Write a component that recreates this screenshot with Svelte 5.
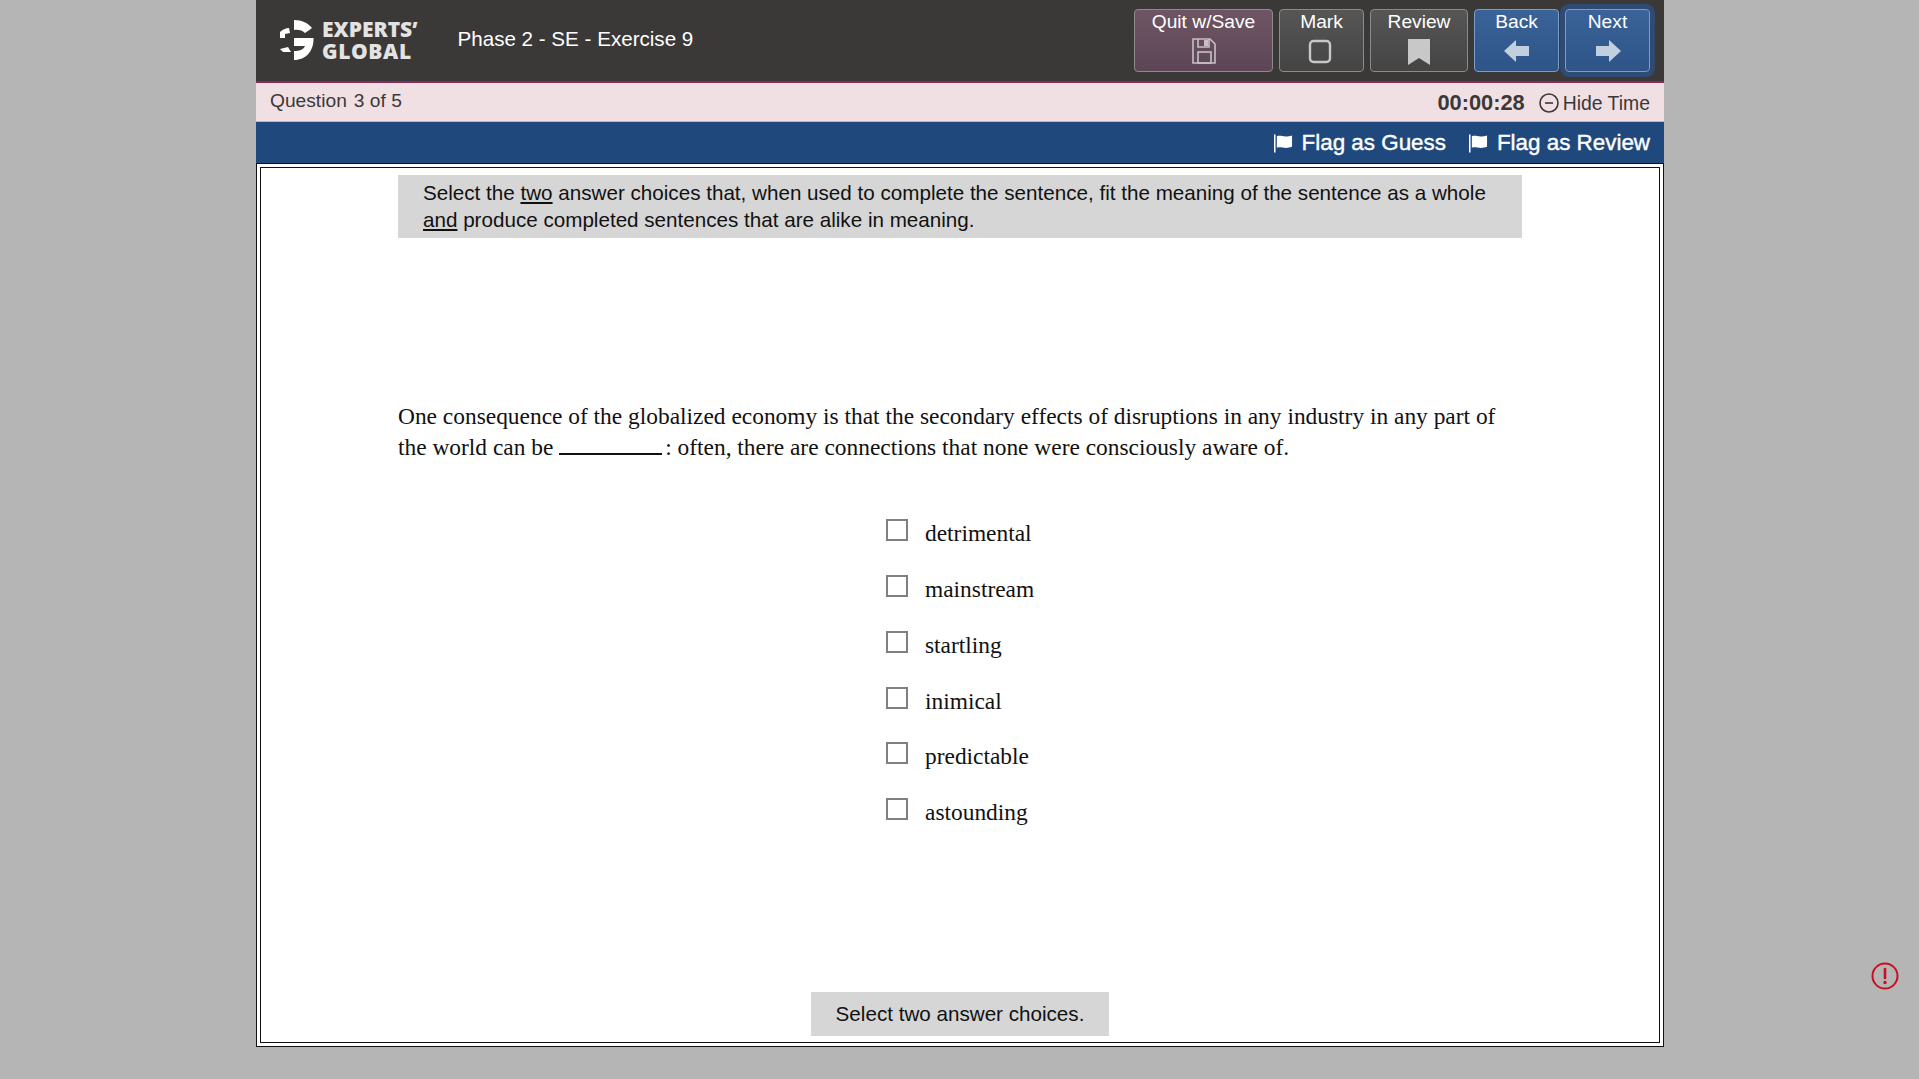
<script>
	const options = ['detrimental', 'mainstream', 'startling', 'inimical', 'predictable', 'astounding'];
</script>

<div class="wrap">
	<header class="top">
		<div class="logo">
			<svg width="34" height="41" viewBox="0 0 34 41" fill="#fff">
				<path d="M14 0 C22 0 28 3 32 8 L25 13 C22 10 18 9.5 14 10 Z" />
				<path d="M0 12 C2 10 6 8 9 8 L10 13 L5 14 V18 H0 Z" />
				<path d="M14 18 H33.5 C34 31 26 40 14 40 V31 C20 31 24 29 25 26 H14 Z" />
				<path d="M0 29 L8 27 L11 32 H3 Z" />
			</svg>
			<div class="logo-text">
				<span>EXPERTS’</span>
				<span class="global">GLOBAL</span>
			</div>
		</div>
		<div class="title">Phase 2 - SE - Exercise 9</div>
		<nav class="buttons">
			<button class="btn quit">
				Quit w/Save
				<svg width="24" height="26" viewBox="0 0 24 26" fill="none" stroke="#c9bfc6" stroke-width="1.6">
					<path d="M1 1 H18 L23 6 V25 H1 Z" />
					<path d="M6 1 V9 H17 V1" />
					<rect x="12" y="2" width="4" height="6" fill="#c9bfc6" stroke="none" />
					<rect x="6" y="14" width="13" height="11" />
				</svg>
			</button>
			<button class="btn mark">
				Mark
				<svg class="mark-icon" width="24" height="26" viewBox="0 0 24 26" fill="none">
					<rect x="2" y="3" width="20" height="21" rx="3.5" stroke="#c8c8c8" stroke-width="2.4" />
				</svg>
			</button>
			<button class="btn review">
				Review
				<svg width="24" height="28" viewBox="0 0 24 28">
					<path d="M1 1 H23 V27 L12 20 L1 27 Z" fill="#c8c8c8" />
				</svg>
			</button>
			<button class="btn blue">
				Back
				<svg class="arrow" width="26" height="22" viewBox="0 0 26 22">
					<path d="M0 11 L12 0 V6 H25 V16 H12 V22 Z" fill="#c2cfdf" />
				</svg>
			</button>
			<button class="btn blue next">
				Next
				<svg class="arrow" width="26" height="22" viewBox="0 0 26 22">
					<path d="M26 11 L14 0 V6 H1 V16 H14 V22 Z" fill="#c2cfdf" />
				</svg>
			</button>
		</nav>
	</header>

	<div class="status">
		<div class="count">Question<span>3 of 5</span></div>
		<div class="timer">
			<b>00:00:28</b>
			<svg width="20" height="20" viewBox="0 0 20 20" fill="none" stroke="#3b3838" stroke-width="1.6">
				<circle cx="10" cy="10" r="9" />
				<path d="M6 10 H14" />
			</svg>
			<span>Hide Time</span>
		</div>
	</div>

	<div class="flags">
		<span class="flag">
			<svg width="19" height="20" viewBox="0 0 20 20" fill="#fff">
				<rect x="0" y="1" width="1.6" height="19" />
				<path d="M3 3 C7 1 10 5 19 2 V14 C11 17 7 13 3 15 Z" />
			</svg>
			Flag as Guess
		</span>
		<span class="flag">
			<svg width="19" height="20" viewBox="0 0 20 20" fill="#fff">
				<rect x="0" y="1" width="1.6" height="19" />
				<path d="M3 3 C7 1 10 5 19 2 V14 C11 17 7 13 3 15 Z" />
			</svg>
			Flag as Review
		</span>
	</div>

	<main class="content">
		<div class="inner">
			<div class="instruction">
				Select the <u>two</u> answer choices that, when used to complete the sentence, fit the meaning of the sentence as a whole <u>and</u> produce completed sentences that are alike in meaning.
			</div>
			<p class="question">
				One consequence of the globalized economy is that the secondary effects of disruptions in any industry in any part of the world can be <span class="blank"></span>: often, there are connections that none were consciously aware of.
			</p>
			<div class="options">
				{#each options as opt}
					<div class="option">
						<span class="box"></span>
						<span class="label">{opt}</span>
					</div>
				{/each}
			</div>
			<div class="hint">Select two answer choices.</div>
		</div>
	</main>
</div>

<svg class="alert" width="28" height="28" viewBox="0 0 28 28" fill="none">
	<circle cx="14" cy="14" r="12.5" stroke="#c8101e" stroke-width="2" />
	<path d="M14 7 V16" stroke="#c8101e" stroke-width="2.6" stroke-linecap="round" />
	<circle cx="14" cy="20.5" r="1.7" fill="#c8101e" />
</svg>

<style>
:global(body) {
	background: #b5b5b5;
	font-family: "Liberation Sans", Arial, sans-serif;
}
.wrap {
	width: 1408px;
	margin-left: 256px;
}
.top {
	height: 81px;
	background: #3b3838;
	border-bottom: 2px solid #8a2a5c;
	display: flex;
	align-items: center;
	color: #fff;
}
.logo {
	display: flex;
	align-items: center;
	margin-left: 24px;
	gap: 8px;
}
.logo-text {
	display: flex;
	flex-direction: column;
	font-family: "Open Sans", sans-serif;
	font-weight: 800;
	font-size: 21px;
	line-height: 22px;
	color: #e4e3e3;
	margin-top: -1px;
}
.global {
	letter-spacing: 0.6px;
}
.title {
	font-size: 20.6px;
	margin-left: 40px;
	margin-top: -3px;
}
.buttons {
	margin-left: auto;
	margin-right: 14px;
	display: flex;
	gap: 6px;
	align-self: flex-start;
	margin-top: 9px;
}
.btn {
	height: 63px;
	width: 85px;
	padding: 1px 0 0;
	border: 1px solid #8b8b8b;
	border-radius: 4px;
	background: linear-gradient(#565656, #444);
	color: #fff;
	font: 19.2px "Liberation Sans", Arial, sans-serif;
	display: flex;
	flex-direction: column;
	align-items: center;
	gap: 5px;
}
.mark-icon {
	margin-left: -3px;
}
.arrow {
	margin-top: 2px;
}
.quit {
	width: 139px;
	background: linear-gradient(#6f5564, #5c4656);
}
.review {
	width: 98px;
}
.blue {
	background: linear-gradient(#3a6399, #2e5488);
	border-color: #7d9cc4;
}
.next {
	box-shadow: 0 0 0 5px #2f4a73;
}
.status {
	height: 38px;
	background: #f0e0e4;
	border-bottom: 1px solid #c4b8bb;
	display: flex;
	justify-content: space-between;
	align-items: center;
	padding: 0 14px;
	color: #3b3838;
	font-size: 19.2px;
}
.count {
	margin-top: -2px;
}
.count span {
	margin-left: 7px;
}
.timer {
	display: flex;
	align-items: center;
	padding-top: 2px;
}
.timer b {
	font-size: 21.8px;
	margin-right: 14px;
}
.timer span {
	margin-left: 4px;
	font-size: 19.4px;
}
.flags {
	height: 41px;
	background: #1f497d;
	display: flex;
	justify-content: flex-end;
	align-items: center;
	gap: 23px;
	padding: 0 14px;
	color: #fff;
	font-size: 22.4px;
	-webkit-text-stroke: 0.4px #fff;
}
.flag {
	display: flex;
	align-items: center;
	gap: 9px;
}
.content {
	height: 884px;
	box-sizing: border-box;
	border: 1px solid #111;
	padding: 3px;
	background: #fff;
}
.inner {
	height: 100%;
	box-sizing: border-box;
	border: 1px solid #111;
	padding: 7px 137px 6px 137px;
	display: flex;
	flex-direction: column;
}
.instruction {
	background: #d6d6d6;
	padding: 4px 25px 5px 25px;
	font-size: 20.63px;
	line-height: 27px;
	color: #111;
}
.question {
	margin: 163px 0 0;
	font-family: "Liberation Serif", "Times New Roman", serif;
	font-size: 23.42px;
	line-height: 30.6px;
	color: #111;
}
.blank {
	display: inline-block;
	width: 103px;
	border-bottom: 2px solid #111;
	margin-right: 3px;
}
.options {
	margin-top: 57px;
	margin-left: 488px;
	display: flex;
	flex-direction: column;
}
.option {
	height: 55.8px;
	display: flex;
	gap: 17px;
	font-family: "Liberation Serif", "Times New Roman", serif;
	font-size: 23.42px;
	line-height: 30px;
	color: #111;
}
.label {
	margin-top: -1px;
}
.box {
	width: 18px;
	height: 18px;
	border: 2px solid #808080;
	background: #fff;
}
.hint {
	margin-top: auto;
	align-self: center;
	background: #d6d6d6;
	height: 44px;
	line-height: 44px;
	padding: 0 25px;
	font-size: 20.63px;
	color: #111;
}
.alert {
	position: fixed;
	left: 1871px;
	top: 962px;
}
</style>
